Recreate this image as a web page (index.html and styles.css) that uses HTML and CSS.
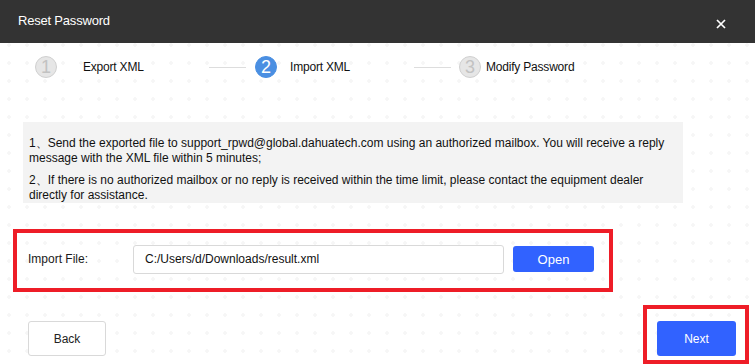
FILE: index.html
```html
<!DOCTYPE html>
<html lang="en">
<head>
  <meta charset="UTF-8" />
  <title>Reset Password</title>
  <link rel="stylesheet" href="styles.css">
</head>
<body>
  <div class="dialog">
    <div class="dialog-header">
      <span class="dialog-title">Reset Password</span>
      <svg class="dialog-close" width="10" height="10" viewBox="0 0 10 10">
        <path d="M1 1 L9 9 M9 1 L1 9" stroke="#ffffff" stroke-width="1.7" fill="none" />
      </svg>
    </div>

    <div class="steps">
      <span class="step-num">1</span>
      <span class="step-label step-label-1">Export XML</span>
      <span class="step-line step-line-1"></span>
      <span class="step-num active">2</span>
      <span class="step-label step-label-2">Import XML</span>
      <span class="step-line step-line-2"></span>
      <span class="step-num">3</span>
      <span class="step-label step-label-3">Modify Password</span>
    </div>

    <div class="notice">
      <p>1、Send the exported file to support_rpwd@global.dahuatech.com using an authorized mailbox. You will receive a reply message with the XML file within 5 minutes;</p>
      <p>2、If there is no authorized mailbox or no reply is received within the time limit, please contact the equipment dealer directly for assistance.</p>
    </div>

    <div class="import-row marked">
      <label class="import-label">Import File:</label>
      <input class="import-input" type="text" value="C:/Users/d/Downloads/result.xml" readonly>
      <button class="btn btn-primary btn-open">Open</button>
    </div>

    <div class="dialog-footer">
      <button class="btn btn-default btn-back">Back</button>
      <div class="next-wrap marked">
        <button class="btn btn-primary btn-next">Next</button>
      </div>
    </div>
  </div>
</body>
</html>
```

FILE: styles.css
```css
:root {
  --header-bg: #333333;
  --primary: #3162ff;
  --mark-red: #ee1d27;
  --text: #1a1a1a;
  --border: #d9d9d9;
}

* {
  box-sizing: border-box;
  margin: 0;
  padding: 0;
}

body {
  font-family: 'Liberation Sans', Arial, sans-serif;
  color: var(--text);
  background: #ffffff;
  width: 755px;
  height: 364px;
  overflow: hidden;
}

.dialog {
  width: 755px;
  height: 364px;
  background-color: #ffffff;
  background-image: radial-gradient(circle, #f6f6f6 1.5px, transparent 2px);
  background-size: 18px 18px;
}

.dialog-header {
  height: 43px;
  background: var(--header-bg);
  display: flex;
  align-items: center;
  justify-content: space-between;
  padding: 0 29px 0 18px;
}

.dialog-title {
  color: #ffffff;
  font-size: 13px;
  letter-spacing: -0.2px;
  margin-top: -2px;
}

.dialog-close {
  margin-top: 5px;
}

/* steps */
.steps {
  display: flex;
  align-items: center;
  height: 22px;
  margin-top: 13px;
  padding-left: 35px;
  font-size: 12px;
  letter-spacing: -0.2px;
}

.step-num {
  width: 22px;
  height: 22px;
  border-radius: 50%;
  background: #e6e6e6;
  border: 1px solid #d0d0d0;
  color: #c2c2c2;
  font-size: 18px;
  font-weight: 300;
  line-height: 20px;
  text-align: center;
  letter-spacing: 0;
  flex: none;
}

.step-num.active {
  background: #4a8fe2;
  border-color: #4a8fe2;
  color: #ffffff;
}

.step-label {
  color: #111111;
  flex: none;
}

.step-label-1 {
  margin-left: 26px;
  width: 126px;
}

.step-label-2 {
  margin-left: 13px;
  width: 124px;
}

.step-label-3 {
  margin-left: 5px;
}

.step-line {
  width: 37px;
  height: 1px;
  background: #dddddd;
  flex: none;
}

.step-line-1 {
  margin-right: 9px;
}

.step-line-2 {
  margin-right: 8px;
}

/* notice */
.notice {
  margin: 44px 0 0 23px;
  width: 660px;
  height: 81px;
  background: #f3f3f3;
  padding: 14px 8px 0 6px;
  font-size: 12px;
  line-height: 15px;
  color: #111111;
}

.notice p + p {
  margin-top: 7px;
}

/* import row */
.marked {
  border: 4px solid var(--mark-red);
}

.import-row {
  margin: 26px 0 0 13px;
  width: 600px;
  height: 63px;
  display: flex;
  align-items: center;
  padding: 0 0 3px 11px;
}

.import-label {
  font-size: 12px;
  width: 105px;
  flex: none;
}

.import-input {
  width: 371px;
  height: 29px;
  border: 1px solid var(--border);
  border-radius: 3px;
  padding: 0 11px;
  font-family: inherit;
  font-size: 12px;
  color: #111111;
  background: #ffffff;
  outline: none;
}

.btn {
  font-family: inherit;
  border-radius: 3px;
  cursor: pointer;
}

.btn-primary {
  background: var(--primary);
  border: none;
  color: #ffffff;
}

.btn-default {
  background: #ffffff;
  border: 1px solid var(--border);
  color: #222222;
}

.btn-open {
  width: 81px;
  height: 26px;
  margin-left: 9px;
  font-size: 13px;
}

/* footer */
.dialog-footer {
  display: flex;
  justify-content: space-between;
  align-items: flex-start;
  margin-top: 13px;
  padding: 0 6px 0 28px;
}

.btn-back {
  width: 78px;
  height: 35px;
  margin-top: 16px;
  font-size: 12px;
}

.next-wrap {
  width: 106px;
  height: 59px;
  padding: 12px 0 0 10px;
}

.btn-next {
  width: 79px;
  height: 35px;
  font-size: 12px;
}
```
